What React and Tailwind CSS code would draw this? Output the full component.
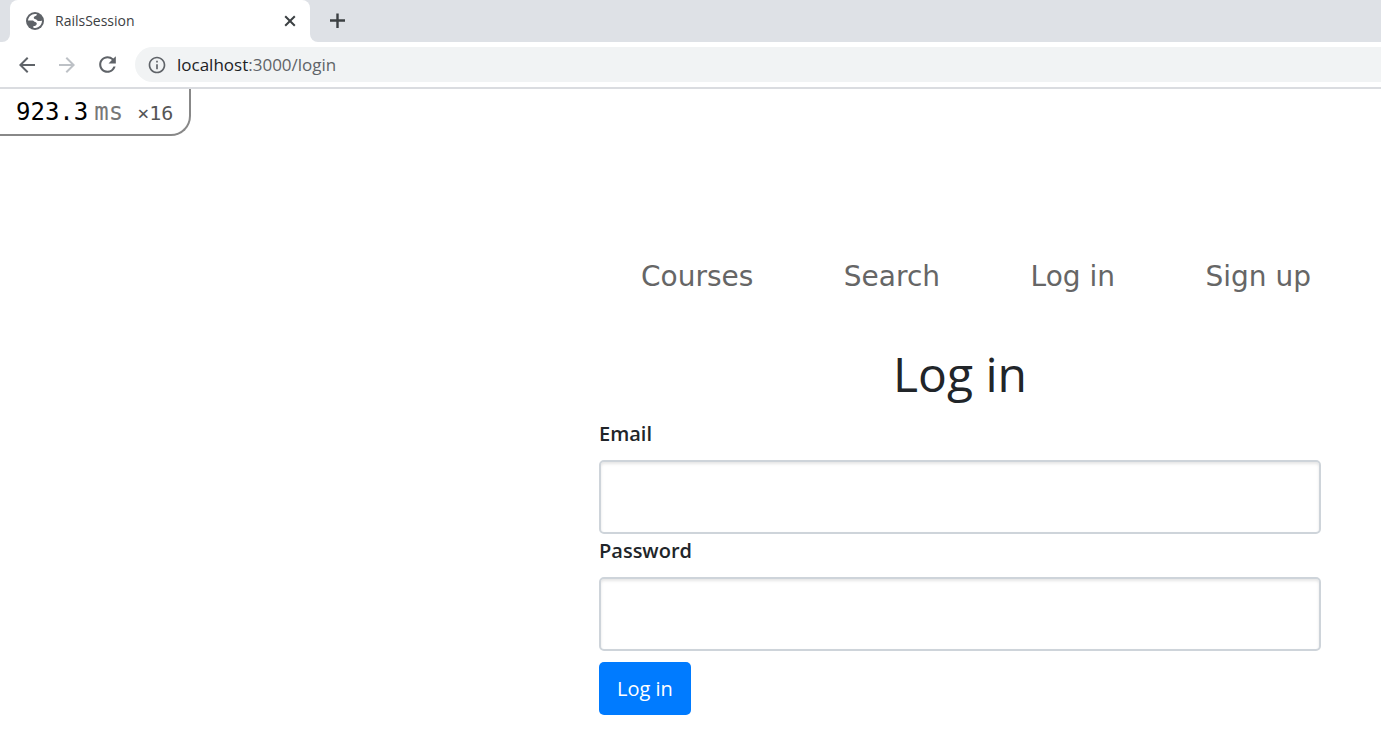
import { MdArrowBack, MdArrowForward, MdRefresh, MdOutlineInfo } from "react-icons/md";

function GlobeIcon() {
  return (
    <svg viewBox="0 0 20 20" className="size-5 shrink-0" aria-hidden="true">
      <circle cx="10" cy="10" r="9" fill="#5f6368" />
      <path
        fill="#fff"
        d="M3 9.600C3.200 6 6.200 3 10 2.900c.7 0 1.300.1 1.900.3-.2.900-.6 1.600-1.400 1.900-.9.300-1.700.8-1.700 1.700 0 .9.700 1.300 1.800 1.500.9.200 1.200.9 1.900 1.400.9.600 2.300.4 3.300.2.500-.1.900-.1 1.200.1-.1 3.600-2.900 6.700-6.700 7 -.9.100-1.300 0-1.900-.2v-1.700c.9-.1 2-.3 2.700-.9.800-.7.900-1.700.3-2.400-.6-.8-1.700-.7-2.300-1.300-.5-.5-.9-.9-1.800-.9H3Z"
      />
    </svg>
  );
}

function CloseIcon() {
  return (
    <svg viewBox="0 0 12 12" className="size-3" fill="none" stroke="currentColor" strokeWidth="2" aria-hidden="true">
      <path d="m1.200 1.200 9.600 9.600m0-9.600-9.600 9.600" />
    </svg>
  );
}

function PlusIcon() {
  return (
    <svg viewBox="0 0 16 16" className="size-4" fill="none" stroke="currentColor" strokeWidth="2.400" aria-hidden="true">
      <path d="M7.500 .5v14.500M0 7.500h15" />
    </svg>
  );
}

function TabStrip() {
  return (
    <div className="flex h-[42px] bg-[#dee1e6]">
      <div className="w-2.5 bg-white">
        <div className="h-full rounded-br-lg bg-[#dee1e6]" />
      </div>
      <div className="flex w-[300px] items-center rounded-t-lg bg-white pr-3.5 pl-[15px]">
        <GlobeIcon />
        <span className="ml-2.5 flex-1 font-['Open_Sans','Noto_Sans',sans-serif] text-sm text-[#3c4043]">
          RailsSession
        </span>
        <button type="button" aria-label="Close tab" className="text-[#3c4043]">
          <CloseIcon />
        </button>
      </div>
      <div className="flex flex-1 bg-white">
        <div className="flex flex-1 items-center rounded-bl-lg bg-[#dee1e6] pl-5">
          <button type="button" aria-label="New tab" className="text-[#3c4043]">
            <PlusIcon />
          </button>
        </div>
      </div>
    </div>
  );
}

function Toolbar() {
  return (
    <div className="flex h-[47px] items-center border-b-2 border-[#dadce0] pl-[15px]">
      <div className="flex gap-4 text-[#5f6368]">
        <button type="button" aria-label="Back">
          <MdArrowBack className="size-6" />
        </button>
        <button type="button" aria-label="Forward" className="text-[#bdc1c6]">
          <MdArrowForward className="size-6" />
        </button>
        <button type="button" aria-label="Reload">
          <MdRefresh className="size-[25px]" />
        </button>
      </div>
      <div className="ml-[15px] flex h-[35px] flex-1 items-center gap-2.5 rounded-l-full bg-[#f1f3f4] pl-3">
        <MdOutlineInfo className="size-5 text-[#5f6368]" />
        <span className="font-['Open_Sans','Noto_Sans',sans-serif] text-[17px] text-[#5f6368]">
          <span className="text-[#202124]">localhost</span>:3000/login
        </span>
      </div>
    </div>
  );
}

function ProfilerBadge() {
  return (
    <button
      type="button"
      className="flex h-[47px] items-baseline rounded-br-[20px] border-r-2 border-b-2 border-[#888] pt-[7px] pr-4 pl-4 font-['DejaVu_Sans_Mono',monospace] text-2xl"
    >
      <span className="text-black">923.3</span>
      <span className="ml-1.5 text-[#777]">ms</span>
      <span className="ml-3.5 text-xl text-[#555]">×16</span>
    </button>
  );
}

const links = ["Courses", "Search", "Log in", "Sign up"];

function Field({ id, label, type }) {
  return (
    <div>
      <label htmlFor={id} className="block pt-px pb-2.5 text-xl leading-8 font-semibold">
        {label}
      </label>
      <input
        id={id}
        type={type}
        className="block h-[74px] w-full rounded-[5px] border-2 border-[#ced4da] bg-white px-4 text-xl shadow-[inset_0_2px_3px_rgba(0,0,0,0.1)]"
      />
    </div>
  );
}

export default function App() {
  return (
    <div className="min-h-screen bg-white">
      <TabStrip />
      <Toolbar />
      <ProfilerBadge />
      <main className="pr-[60px] pb-6 pl-[599px] font-['Open_Sans','Noto_Sans',sans-serif] text-[#212529]">
        <nav className="mt-[120px] flex justify-between pr-2.5 pl-[42px] font-['DejaVu_Sans',Verdana,sans-serif] text-[28px] leading-[42px] text-[#666]">
          {links.map((link) => (
            <a key={link} href="#">
              {link}
            </a>
          ))}
        </nav>
        <h1 className="mt-10 mb-[7px] text-center text-[48px] leading-[72px] font-normal">Log in</h1>
        <form>
          <Field id="email" label="Email" type="email" />
          <Field id="password" label="Password" type="password" />
          <button type="submit" className="mt-[11px] h-[53px] rounded-[5px] bg-[#007bff] px-[18px] text-xl text-white">
            Log in
          </button>
        </form>
      </main>
    </div>
  );
}
